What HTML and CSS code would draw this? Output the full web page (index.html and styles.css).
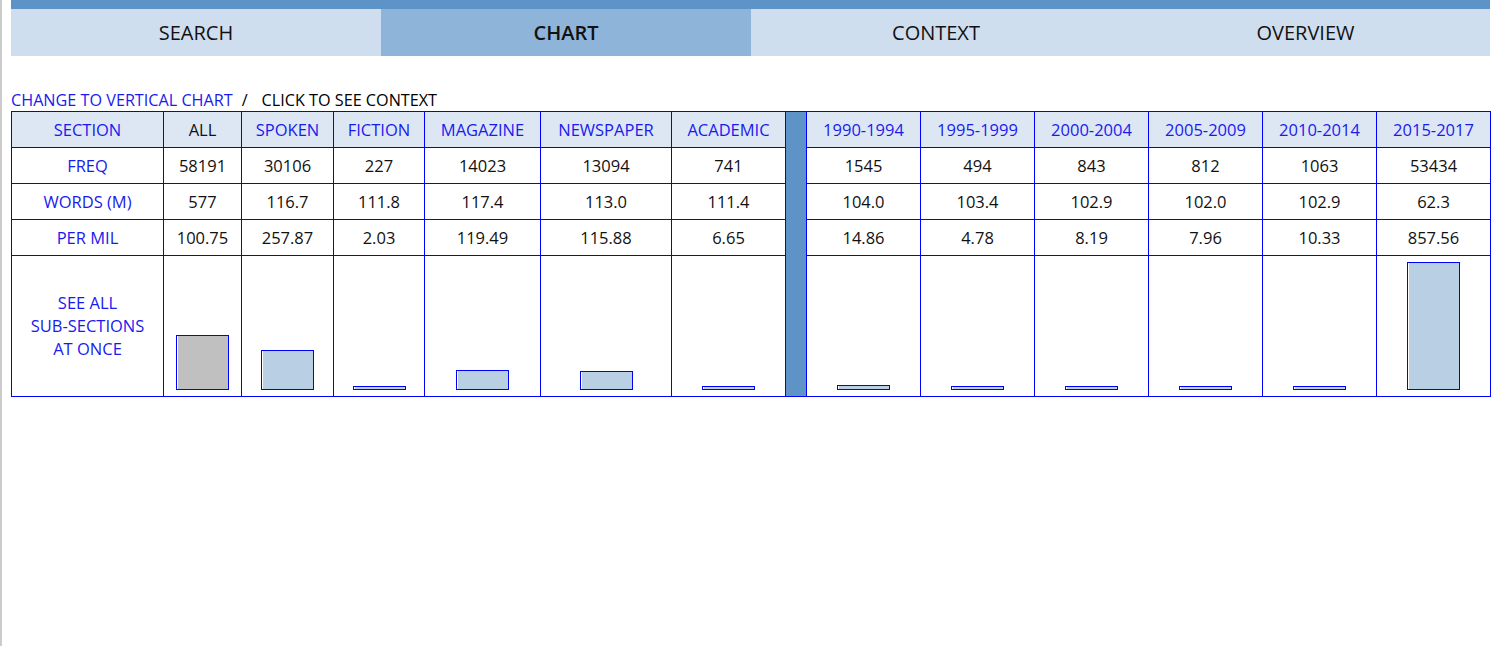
FILE: index.html
```html
<!DOCTYPE html>
<html>
<head>
<meta charset="utf-8">
<title>Chart</title>
<link rel="stylesheet" href="styles.css">
</head>
<body>
<div class="page">
  <div class="topbar"></div>
  <nav class="tabs">
    <a class="tab">SEARCH</a>
    <a class="tab active">CHART</a>
    <a class="tab">CONTEXT</a>
    <a class="tab">OVERVIEW</a>
  </nav>
  <div class="links">
    <a class="link">CHANGE TO VERTICAL CHART</a><span class="sep">/</span><span class="plain">CLICK TO SEE CONTEXT</span>
  </div>
  <table class="chart">
    <colgroup>
      <col class="c-label"><col class="c-all"><col class="c-spoken"><col class="c-fiction"><col class="c-mag"><col class="c-news"><col class="c-acad"><col class="c-sep">
      <col class="c-year"><col class="c-year"><col class="c-year"><col class="c-year"><col class="c-year"><col class="c-year">
    </colgroup>
    <tr class="head">
      <td class="lnk">SECTION</td><td>ALL</td><td class="lnk">SPOKEN</td><td class="lnk">FICTION</td><td class="lnk">MAGAZINE</td><td class="lnk">NEWSPAPER</td><td class="lnk">ACADEMIC</td>
      <td class="divider" rowspan="5"></td>
      <td class="lnk">1990-1994</td><td class="lnk">1995-1999</td><td class="lnk">2000-2004</td><td class="lnk">2005-2009</td><td class="lnk">2010-2014</td><td class="lnk">2015-2017</td>
    </tr>
    <tr>
      <td class="lnk">FREQ</td><td>58191</td><td>30106</td><td>227</td><td>14023</td><td>13094</td><td>741</td>
      <td>1545</td><td>494</td><td>843</td><td>812</td><td>1063</td><td>53434</td>
    </tr>
    <tr>
      <td class="lnk">WORDS (M)</td><td>577</td><td>116.7</td><td>111.8</td><td>117.4</td><td>113.0</td><td>111.4</td>
      <td>104.0</td><td>103.4</td><td>102.9</td><td>102.0</td><td>102.9</td><td>62.3</td>
    </tr>
    <tr>
      <td class="lnk">PER MIL</td><td>100.75</td><td>257.87</td><td>2.03</td><td>119.49</td><td>115.88</td><td>6.65</td>
      <td>14.86</td><td>4.78</td><td>8.19</td><td>7.96</td><td>10.33</td><td>857.56</td>
    </tr>
    <tr class="bars">
      <td class="lnk seeall">SEE ALL<br>SUB-SECTIONS<br>AT ONCE</td>
      <td class="barcell"><div class="bar gray" style="height:53px"></div></td>
      <td class="barcell"><div class="bar" style="height:38px"></div></td>
      <td class="barcell"><div class="bar" style="height:2px"></div></td>
      <td class="barcell"><div class="bar" style="height:18px"></div></td>
      <td class="barcell"><div class="bar" style="height:17px"></div></td>
      <td class="barcell"><div class="bar" style="height:2px"></div></td>
      <td class="barcell"><div class="bar" style="height:3px"></div></td>
      <td class="barcell"><div class="bar" style="height:2px"></div></td>
      <td class="barcell"><div class="bar" style="height:2px"></div></td>
      <td class="barcell"><div class="bar" style="height:2px"></div></td>
      <td class="barcell"><div class="bar" style="height:2px"></div></td>
      <td class="barcell"><div class="bar" style="height:126px"></div></td>
    </tr>
  </table>
</div>
</body>
</html>
```

FILE: styles.css
```css
html, body {
  margin: 0;
  padding: 0;
  background: #ffffff;
}
body {
  font-family: "Open Sans", "Liberation Sans", sans-serif;
  font-size: 16px;
  color: #000000;
  border-left: 2px solid #cccccc;
  min-height: 646px;
  box-sizing: border-box;
}
.page {
  padding-left: 9px;
  width: 1479px;
}
.topbar {
  height: 9px;
  background: #5e93c7;
}
.tabs {
  display: grid;
  grid-template-columns: 370px 370px 370px 369px;
  height: 47px;
  background: #cfdeef;
}
.tab {
  display: flex;
  align-items: center;
  justify-content: center;
  font-size: 20px;
  color: #111111;
  padding-bottom: 1px;
}
.tab.active {
  background: #8fb4da;
  font-weight: 600;
}
.links {
  margin-top: 33px;
  height: 22px;
  line-height: 22px;
  font-size: 16.2px;
  white-space: nowrap;
}
.link {
  color: #1a1aee;
}
.sep {
  margin: 0 14px 0 9px;
}
.chart {
  border-collapse: collapse;
  table-layout: fixed;
  width: 1479px;
  font-size: 16.5px;
}
.chart td {
  border: 1px solid #0000ff;
  text-align: center;
  padding: 0;
  height: 35px;
  line-height: 22px;
  color: #111111;
}
.chart .head td {
  background: #dce7f3;
}
.chart td.lnk {
  color: #1a1aee;
}
.chart td.divider {
  background: #5e93c7;
}
.c-label { width: 152px; }
.c-all { width: 78px; }
.c-spoken { width: 92px; }
.c-fiction { width: 91px; }
.c-mag { width: 116px; }
.c-news { width: 131px; }
.c-acad { width: 114px; }
.c-sep { width: 21px; }
.c-year { width: 114px; }
.chart .bars td {
  height: 134px;
}
.chart td.seeall {
  line-height: 23px;
  vertical-align: middle;
  padding-bottom: 2px;
}
.chart td.barcell {
  vertical-align: bottom;
  padding-bottom: 6px;
  line-height: 0;
}
.bar {
  display: inline-block;
  width: 51px;
  border: 1px solid #0000ff;
  background: #b9cfe4;
  box-shadow: inset 1px 0 0 #ffffff;
  vertical-align: bottom;
}
.bar.gray {
  background: #c0c0c0;
}
```
